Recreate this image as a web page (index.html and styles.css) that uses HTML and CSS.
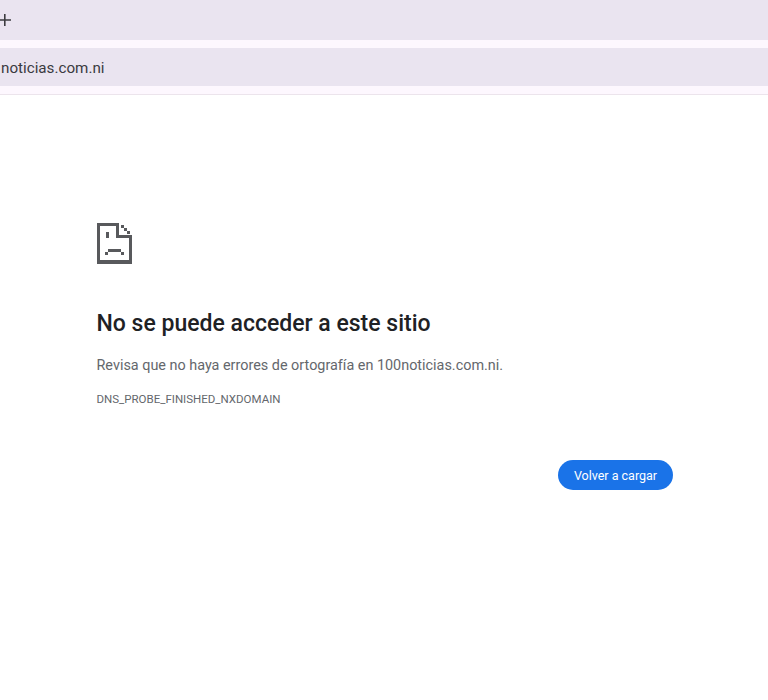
FILE: index.html
```html
<!DOCTYPE html>
<html lang="es">
<head>
    <meta charset="UTF-8">
    <title>100noticias.com.ni</title>
    <link rel="stylesheet" href="styles.css">
</head>
<body>
    <div class="toolbar">
        <div class="tab-bar">
            <svg class="plus" width="11" height="12" viewBox="0 0 11 12">
                <path fill="#3c3c40" d="M4 0h1.6v12H4zM0 5.2h11v1.6H0z"/>
            </svg>
        </div>
        <div class="address-bar"><span class="address">noticias.com.ni</span></div>
    </div>
    <main class="error-page">
        <svg class="sad-icon" width="36" height="44" viewBox="0 0 36 44" shape-rendering="crispEdges">
            <path fill="#58595c" d="M1 1h20v3H4v34h29V15h3v27H1z"/>
            <path fill="#58595c" d="M20 1h3v12h13v3H20z"/>
            <path fill="#58595c" d="M25 3h3v3h-3zM28 6h3v3h-3zM31 9h3v3h-3z"/>
            <path fill="#58595c" d="M10 10h3v6h-3zM12 27h13v3H12zM9 30h3v3H9zM25 30h3v3h-3z"/>
        </svg>
        <h1>No se puede acceder a este sitio</h1>
        <p class="message">Revisa que no haya errores de ortografía en 100noticias.com.ni.</p>
        <div class="error-code">DNS_PROBE_FINISHED_NXDOMAIN</div>
        <div class="actions">
            <button class="reload">Volver a cargar</button>
        </div>
    </main>
</body>
</html>
```

FILE: styles.css
```css
body {
    margin: 0;
    background: #fff;
    font-family: Roboto, "Liberation Sans", sans-serif;
    overflow: hidden;
}
.toolbar {
    height: 94px;
    background: #fdf7fe;
    border-bottom: 1px solid #ece4ec;
    overflow: hidden;
}
.tab-bar {
    height: 40px;
    background: #eae4f0;
    display: flex;
    align-items: center;
}
.plus {
    margin-top: -1px;
}
.address-bar {
    height: 38px;
    margin-top: 8px;
    background: #eae4f0;
    display: flex;
    align-items: center;
}
.address {
    font-size: 15.2px;
    color: #3a3a40;
    margin: 1px 0 0 1px;
}
.error-page {
    padding: 127px 95px 0 96.5px;
}
.sad-icon {
    display: block;
    margin-left: -0.5px;
}
h1 {
    margin: 44px 0 0;
    font-size: 23px;
    font-weight: 500;
    line-height: 28px;
    color: #202124;
}
.message {
    margin: 17px 0 0;
    font-size: 14.4px;
    line-height: 22px;
    color: #64676c;
}
.error-code {
    margin-top: 14px;
    font-size: 11.5px;
    line-height: 16px;
    color: #64676c;
}
.actions {
    display: flex;
    justify-content: flex-end;
    margin-top: 53px;
}
.reload {
    width: 115px;
    height: 30px;
    padding: 0;
    border: none;
    border-radius: 15px;
    background: #1a73e8;
    color: #fff;
    font-family: inherit;
    font-size: 12.5px;
}
```
